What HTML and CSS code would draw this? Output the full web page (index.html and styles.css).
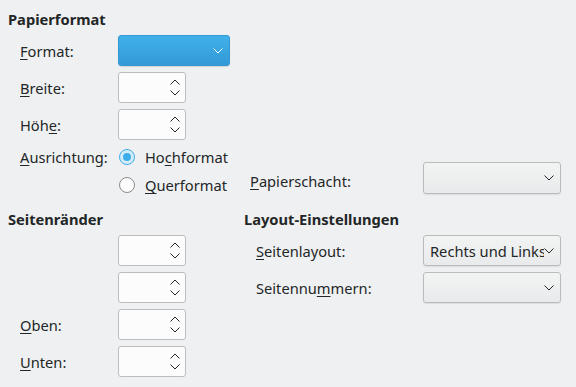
FILE: index.html
```html
<!DOCTYPE html>
<html lang="de">
<head>
<meta charset="utf-8">
<link rel="stylesheet" href="styles.css">
</head>
<body>
<div class="page">
  <div class="top">
    <section class="group left">
      <h2 class="heading">Papierformat</h2>
      <div class="form form-left">
        <span class="label"><u>F</u>ormat:</span>
        <div class="combo combo-blue"><span class="combo-text"></span>
          <svg class="chev" width="10" height="6" viewBox="0 0 10 6"><polyline points="0.5,0.5 5,5 9.5,0.5" fill="none" stroke="#ffffff" stroke-width="1"/></svg>
        </div>
        <span class="label"><u>B</u>reite:</span>
        <div class="spin"><svg width="10" height="17" viewBox="0 0 10 17"><polyline points="0.5,5.5 5,1 9.5,5.5" fill="none" stroke="#232627"/><polyline points="0.5,11.5 5,16 9.5,11.5" fill="none" stroke="#232627"/></svg></div>
        <span class="label">Höh<u>e</u>:</span>
        <div class="spin"><svg width="10" height="17" viewBox="0 0 10 17"><polyline points="0.5,5.5 5,1 9.5,5.5" fill="none" stroke="#232627"/><polyline points="0.5,11.5 5,16 9.5,11.5" fill="none" stroke="#232627"/></svg></div>
        <span class="label radio-label"><u>A</u>usrichtung:</span>
        <div class="radio-row"><span class="radio checked"></span><span>Ho<u>c</u>hformat</span></div>
        <span class="label radio-label"></span>
        <div class="radio-row"><span class="radio"></span><span><u>Q</u>uerformat</span></div>
      </div>
    </section>
    <div class="tray">
      <span class="label tray-label"><u>P</u>apierschacht:</span>
      <div class="combo combo-gray"><span class="combo-text"></span>
        <svg class="chev" width="10" height="6" viewBox="0 0 10 6"><polyline points="0.5,0.5 5,5 9.5,0.5" fill="none" stroke="#232627" stroke-width="1"/></svg>
      </div>
    </div>
  </div>
  <div class="bottom">
    <section class="group left">
      <h2 class="heading">Seitenränder</h2>
      <div class="form form-left">
        <span class="label"></span>
        <div class="spin"><svg width="10" height="17" viewBox="0 0 10 17"><polyline points="0.5,5.5 5,1 9.5,5.5" fill="none" stroke="#232627"/><polyline points="0.5,11.5 5,16 9.5,11.5" fill="none" stroke="#232627"/></svg></div>
        <span class="label"></span>
        <div class="spin"><svg width="10" height="17" viewBox="0 0 10 17"><polyline points="0.5,5.5 5,1 9.5,5.5" fill="none" stroke="#232627"/><polyline points="0.5,11.5 5,16 9.5,11.5" fill="none" stroke="#232627"/></svg></div>
        <span class="label"><u>O</u>ben:</span>
        <div class="spin"><svg width="10" height="17" viewBox="0 0 10 17"><polyline points="0.5,5.5 5,1 9.5,5.5" fill="none" stroke="#232627"/><polyline points="0.5,11.5 5,16 9.5,11.5" fill="none" stroke="#232627"/></svg></div>
        <span class="label"><u>U</u>nten:</span>
        <div class="spin"><svg width="10" height="17" viewBox="0 0 10 17"><polyline points="0.5,5.5 5,1 9.5,5.5" fill="none" stroke="#232627"/><polyline points="0.5,11.5 5,16 9.5,11.5" fill="none" stroke="#232627"/></svg></div>
      </div>
    </section>
    <section class="group right">
      <h2 class="heading">Layout-Einstellungen</h2>
      <div class="form form-right">
        <span class="label"><u>S</u>eitenlayout:</span>
        <div class="combo combo-gray"><span class="combo-text">Rechts und Links</span>
          <svg class="chev" width="10" height="6" viewBox="0 0 10 6"><polyline points="0.5,0.5 5,5 9.5,0.5" fill="none" stroke="#232627" stroke-width="1"/></svg>
        </div>
        <span class="label">Seitennu<u>m</u>mern:</span>
        <div class="combo combo-gray"><span class="combo-text"></span>
          <svg class="chev" width="10" height="6" viewBox="0 0 10 6"><polyline points="0.5,0.5 5,5 9.5,0.5" fill="none" stroke="#232627" stroke-width="1"/></svg>
        </div>
      </div>
    </section>
  </div>
</div>
</body>
</html>
```
FILE: styles.css
```css
* { box-sizing: border-box; }
html, body {
  margin: 0;
  padding: 0;
  background: #eff0f1;
}
body {
  font-family: "Noto Sans", "DejaVu Sans", sans-serif;
  font-size: 14.67px;
  color: #232627;
  width: 576px;
  height: 387px;
  overflow: hidden;
}
u {
  text-decoration: underline;
  text-underline-offset: 2px;
  text-decoration-thickness: 1px;
}
.page {
  padding: 10px 8px 0 8px;
}
.top, .bottom {
  display: flex;
}
.bottom {
  margin-top: 14px;
}
.left {
  width: 236px;
  flex: none;
}
.right {
  flex: 1;
}
.heading {
  margin: 0 0 7px 0;
  font-size: 14.67px;
  font-weight: bold;
  line-height: 18px;
}
.form {
  display: grid;
  row-gap: 6px;
  align-items: center;
  padding-left: 12px;
}
.form-left {
  grid-template-columns: 98px auto;
  justify-items: start;
}
.form-right {
  grid-template-columns: 167px 138px;
}
.label {
  line-height: 18px;
  white-space: nowrap;
}
.combo {
  height: 31px;
  border-radius: 3px;
  display: flex;
  align-items: center;
  padding: 0 6px 0 6px;
  overflow: hidden;
}
.combo-text {
  flex: 1;
  min-width: 0;
  overflow: hidden;
  white-space: nowrap;
  line-height: 18px;
}
.chev {
  flex: none;
  display: block;
}
.combo-blue {
  width: 112px;
  background: linear-gradient(#40b1ea, #3399d8);
  border: 1px solid #3597d3;
  box-shadow: 0 1px 1px rgba(0,0,0,0.12);
}
.combo-gray {
  width: 138px;
  background: linear-gradient(#f2f3f3, #e9eaeb);
  border: 1px solid #babbbc;
  box-shadow: 0 1px 1px rgba(0,0,0,0.08);
}
.spin {
  width: 68px;
  height: 31px;
  background: #fcfcfc;
  border: 1px solid #bcbdbe;
  border-radius: 3px;
  display: flex;
  justify-content: flex-end;
  align-items: center;
  padding-right: 5px;
}
.spin svg { display: block; }
.radio-row {
  height: 22px;
  display: flex;
  align-items: center;
  gap: 10px;
  padding-left: 1px;
  white-space: nowrap;
}
.radio {
  width: 16px;
  height: 16px;
  border-radius: 50%;
  border: 1px solid #8b8c8d;
  background: #fcfcfc;
  display: flex;
  align-items: center;
  justify-content: center;
  flex: none;
}
.radio.checked {
  border-color: #3daee9;
  background: #d4ecf9;
}
.radio.checked::after {
  content: "";
  width: 8px;
  height: 8px;
  border-radius: 50%;
  background: #3daee9;
}
.tray {
  align-self: flex-end;
  margin-bottom: 2px;
  padding-left: 6px;
  display: grid;
  grid-template-columns: 173px 138px;
  align-items: center;
}
.tray-label {
  padding-top: 5px;
}
.tray .combo {
  height: 32px;
}
```
